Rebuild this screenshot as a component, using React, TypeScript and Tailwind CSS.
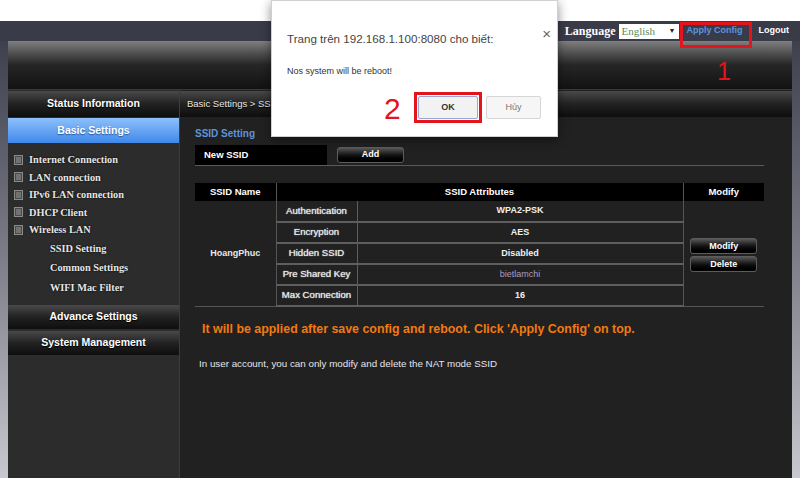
import React from 'react';

const sans = "font-['Liberation_Sans',Arial,sans-serif]";
const serif = "font-['Liberation_Serif','Times_New_Roman',serif]";
const darkBar = 'bg-linear-to-b from-[#4a4a4a] via-[#222222] to-[#0e0e0e]';
const glossBtn =
  'bg-linear-to-b from-[#5a5a5a] via-[#151515] to-[#000000] border border-[#5c5c5c] rounded-[3px] text-white font-bold text-[9px]';

const CheckIcon: React.FC = () => (
  <svg width="9" height="10" viewBox="0 0 9 10" className="shrink-0">
    <rect x="0.5" y="0.5" width="8" height="9" fill="#4a4a4a" stroke="#8a8a8a" />
    <line x1="2" y1="3" x2="7" y2="3" stroke="#9a9a9a" />
    <line x1="2" y1="5" x2="7" y2="5" stroke="#9a9a9a" />
    <line x1="2" y1="7" x2="7" y2="7" stroke="#9a9a9a" />
  </svg>
);

const SideButton: React.FC<{ label: string; className?: string }> = ({ label, className }) => (
  <div
    className={`${darkBar} ${sans} flex items-center justify-center text-white font-bold text-[10.5px] [text-shadow:0_1px_1px_#000] ${className ?? ''}`}
  >
    {label}
  </div>
);

const menuItems = ['Internet Connection', 'LAN connection', 'IPv6 LAN connection', 'DHCP Client', 'Wireless LAN'];
const subItems = ['SSID Setting', 'Common Settings', 'WIFI Mac Filter'];

const rows = [
  { label: 'Authentication', value: 'WPA2-PSK', color: 'text-[#f0f0f0]' },
  { label: 'Encryption', value: 'AES', color: 'text-[#f0f0f0]' },
  { label: 'Hidden SSID', value: 'Disabled', color: 'text-[#f0f0f0]' },
  { label: 'Pre Shared Key', value: 'bietlamchi', color: 'text-[#a99cc0] font-normal' },
  { label: 'Max Connection', value: '16', color: 'text-[#f0f0f0]' },
];

const App: React.FC = () => {
  return (
    <div className={`relative w-[800px] h-[500px] bg-white overflow-hidden ${sans}`}>
      {/* router page screenshot */}
      <div className="mt-[21px] h-[457px] flex flex-col bg-linear-to-b from-[#3a3b49] via-[#7a7b86] to-[#c8c8d0]">
        {/* top strip */}
        <div className="h-[20px] bg-[#3a3b49] flex items-center justify-end pr-[11px]">
          <span className={`${serif} text-white font-bold text-[12px]`}>Language</span>
          <div className={`${serif} ml-[3px] w-[60px] h-[15px] bg-white flex items-center justify-between px-[3px] text-[11px] text-[#5f8a5a]`}>
            <span>English</span>
            <span className="text-[7px] text-[#222]">▼</span>
          </div>
          <span className="ml-[8px] text-[#5b95dd] font-bold text-[9px]">Apply Config</span>
          <span className="ml-[16px] text-white font-bold text-[9px]">Logout</span>
        </div>

        {/* header */}
        <div className="mx-[8px] h-[49px] bg-linear-to-b from-[#808080] via-[#262626] via-50% to-[#121212] border-b border-[#3a3a3a]" />

        {/* body */}
        <div className="mx-[8px] flex flex-1">
          {/* sidebar */}
          <div className="w-[172px] bg-[#2c2c2c] flex flex-col border-r border-[#3c3c3c]">
            <SideButton label="Status Information" className="mt-[1px] h-[26px]" />
            <div className="mt-[1px] h-[25px] bg-linear-to-b from-[#8cc0fa] to-[#3f88ea] flex items-center justify-center text-white font-bold text-[10.5px] [text-shadow:0_1px_1px_#2a5aa0]">
              Basic Settings
            </div>
            <div className="pt-[8px] flex flex-col">
              {menuItems.map((m) => (
                <div key={m} className="h-[17.5px] flex items-center pl-[6px] gap-[6px]">
                  <CheckIcon />
                  <span className={`${serif} text-[#e6e6e6] font-bold text-[10.3px] [text-shadow:0_0_2px_#000]`}>{m}</span>
                </div>
              ))}
              {subItems.map((s) => (
                <div key={s} className="h-[19.5px] flex items-center pl-[42px]">
                  <span className={`${serif} text-[#e6e6e6] font-bold text-[10.3px] [text-shadow:0_0_2px_#000]`}>{s}</span>
                </div>
              ))}
            </div>
            <SideButton label="Advance Settings" className="mt-[8px] h-[24px]" />
            <SideButton label="System Management" className="mt-[2px] h-[24px]" />
          </div>

          {/* main */}
          <div className="flex-1 bg-[#212121] flex flex-col">
            <div className={`${darkBar} mt-[1px] h-[26px] flex items-center pl-[7px] text-[#e8e8e8] text-[9.5px] [text-shadow:0_1px_1px_#000]`}>
              Basic Settings &gt; SSID Setting
            </div>

            <div className="pl-[15px] w-[584px] flex flex-col">
              <div className="mt-[12px] h-[10px] leading-[10px] text-[10px] font-bold text-[#5f93da]">SSID Setting</div>

              <div className="mt-[6px] h-[21px] flex items-stretch border-b border-[#5a5a5a]">
                <div className="w-[132px] bg-black flex items-center pl-[9px] text-white font-bold text-[9.5px]">New SSID</div>
                <div className="flex items-center pl-[10px]">
                  <div className={`${glossBtn} w-[67px] h-[16px] flex items-center justify-center`}>Add</div>
                </div>
              </div>

              <table className="mt-[17px] w-[569px] border-collapse text-[9px]">
                <thead>
                  <tr className="h-[18px] bg-black text-white font-bold text-[9.5px]">
                    <th className="w-[81px] border-r border-[#555]">SSID Name</th>
                    <th colSpan={2} className="border-r border-[#555]">SSID Attributes</th>
                    <th className="w-[81px]">Modify</th>
                  </tr>
                </thead>
                <tbody>
                  {rows.map((r, i) => (
                    <tr key={r.label} className="h-[21px]">
                      {i === 0 && (
                        <td rowSpan={5} className="border-r border-b border-[#555] text-center text-[#e8e8e8] font-bold">
                          HoangPhuc
                        </td>
                      )}
                      <td className="w-[81px] border-r border-b-2 border-[#5e5e5e] text-center text-[9.6px] text-[#e4e4e4] [text-shadow:0_0_1px_#fff]">
                        {r.label}
                      </td>
                      <td className={`border-b-2 border-[#5e5e5e] text-center font-bold ${r.color}`}>{r.value}</td>
                      {i === 0 && (
                        <td rowSpan={5} className="border-l border-b border-[#555] align-middle">
                          <div className="flex flex-col items-center gap-[2px] pt-[4px]">
                            <div className={`${glossBtn} w-[67px] h-[16px] flex items-center justify-center`}>Modify</div>
                            <div className={`${glossBtn} w-[67px] h-[16px] flex items-center justify-center`}>Delete</div>
                          </div>
                        </td>
                      )}
                    </tr>
                  ))}
                </tbody>
              </table>

              <div className="mt-[15px] pl-[7px] text-[12.4px] leading-[14px] font-bold text-[#f27a12]">
                It will be applied after save config and reboot. Click 'Apply Config' on top.
              </div>
              <div className="mt-[22px] pl-[4px] text-[9.8px] leading-[11px] text-[#e4e4ec]">
                In user account, you can only modify and delete the NAT mode SSID
              </div>
            </div>
          </div>
        </div>
      </div>

      {/* browser alert dialog */}
      <div className="absolute left-[271px] top-0 w-[287px] h-[137px] bg-white border border-[#d0d0d0] shadow-[0_3px_10px_rgba(0,0,0,0.45)] flex flex-col pl-[15px] pr-[16px]">
        <span className="absolute right-[6px] top-[22px] text-[15px] text-[#666]">×</span>
        <div className="mt-[31px] text-[11.6px] leading-[14px] text-[#444]">Trang trên 192.168.1.100:8080 cho biết:</div>
        <div className="mt-[20px] text-[9px] leading-[11px] text-[#333]">Nos system will be reboot!</div>
        <div className="mt-[19px] flex justify-end gap-[8px]">
          <div className="w-[60px] h-[23px] bg-[#f2f2f2] border border-[#9aa6d8] rounded-[2px] flex items-center justify-center text-[9px] font-bold text-[#333]">
            OK
          </div>
          <div className="w-[55px] h-[23px] bg-[#f6f6f6] border border-[#d6d6d6] rounded-[2px] flex items-center justify-center text-[9px] text-[#777]">
            Hủy
          </div>
        </div>
      </div>

      {/* red annotations */}
      <div className="absolute left-[680px] top-[22px] w-[72px] h-[26px] border-[3px] border-[#e3141b]" />
      <div className="absolute left-[717px] top-[57px] text-[25px] leading-[28px] text-[#e3141b]">1</div>
      <div className="absolute left-[414px] top-[92px] w-[68px] h-[31px] border-[3px] border-[#e3141b]" />
      <div className="absolute left-[384px] top-[93px] text-[30px] leading-[32px] text-[#e3141b]">2</div>
    </div>
  );
};

export default App;
